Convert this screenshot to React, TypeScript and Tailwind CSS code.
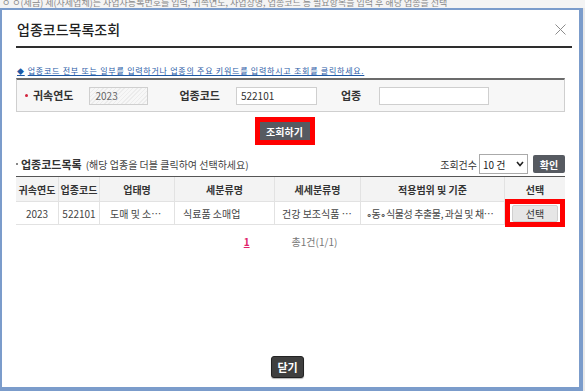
const FONT = { fontFamily: '"Noto Sans CJK KR", "Noto Sans", "Liberation Sans", sans-serif' };

const cols = [
  { label: "귀속연도", w: "w-[43px]", value: "2023", align: "justify-center" },
  { label: "업종코드", w: "w-[41px]", value: "522101", align: "justify-center" },
  { label: "업태명", w: "w-[75px]", value: "도매 및 소…", align: "pl-[10px]" },
  { label: "세분류명", w: "w-[100px]", value: "식료품 소매업", align: "pl-[8px]" },
  { label: "세세분류명", w: "w-[86px]", value: "건강 보조식품 …", align: "pl-[7px]" },
  { label: "적용범위 및 기준", w: "w-[144px]", value: "∘동∘식물성 추출물, 과실 및 채…", align: "pl-[5px] tracking-[-0.4px]" },
];

function Label({ children, bullet }: { children: React.ReactNode; bullet?: boolean }) {
  return (
    <span className="flex items-center text-[11px] font-bold text-[#333]">
      {bullet && <span className="mr-[5px] h-[3px] w-[3px] rounded-full bg-[#d2233c]" />}
      {children}
    </span>
  );
}

export default function App() {
  return (
    <div className="flex h-[391px] w-[585px] flex-col overflow-hidden bg-[#dfe3ea]" style={FONT}>
      {/* page behind the popup */}
      <div className="h-[8px] overflow-hidden whitespace-nowrap bg-[#f4f4f4] pl-[2px] text-[9px] leading-[5px] text-[#888]">
        ㅇ ㅇ(세금) 세(자세업체)는 사업자등록번호를 입력, 귀속연도, 사업장명, 업종코드 등 필요항목을 입력 후 해당 업종을 선택
      </div>

      <div className="flex flex-1">
        {/* popup */}
        <div className="flex w-[583px] flex-col border-[2px] border-r-[4px] border-b-[4px] border-[#7b9ccb] bg-white pl-[14px] pr-[14px]">
          {/* header */}
          <div className="mr-[-7px] flex h-[38px] items-center justify-between border-b-2 border-[#2e2e2e] pt-[2px]">
            <span className="pl-[1px] text-[14px] font-medium text-[#222]">업종코드목록조회</span>
            <svg width="11" height="11" viewBox="0 0 11 11" className="mr-[6px]">
              <path d="M0.5 0.5 L10.5 10.5 M10.5 0.5 L0.5 10.5" stroke="#8c8c8c" strokeWidth="1" />
            </svg>
          </div>

          {/* info */}
          <p className="mt-[18px] flex items-center whitespace-nowrap pl-[1px] text-[8px] leading-[10px] tracking-[0.75px] text-[#1f5aa6] underline">
            <span className="mr-[3px] text-[7px] text-[#1f5aa6]">◆</span>
            업종코드 전부 또는 일부를 입력하거나 업종의 주요 키워드를 입력하시고 조회를 클릭하세요.
          </p>

          {/* search box */}
          <div className="mt-[2px] flex h-[34px] items-center border border-t-2 border-[#cfcfcf] border-t-[#6b6b6b] bg-[#f7f7f7] pl-[8px]">
            <Label bullet>귀속연도</Label>
            <div
              className="ml-[16px] flex h-[18px] w-[59px] items-center border border-[#cfcfcf] pl-[5px] text-[10px] text-[#666]"
              style={{ backgroundImage: "repeating-linear-gradient(135deg, #ececec 0 1px, #f7f7f7 1px 3px)" }}
            >
              2023
            </div>
            <span className="ml-[31px]">
              <Label>업종코드</Label>
            </span>
            <div className="ml-[16px] flex h-[18px] w-[81px] items-center border border-[#cfcfcf] bg-white pl-[4px] text-[10px] text-[#333]">
              522101
            </div>
            <span className="ml-[24px]">
              <Label>업종</Label>
            </span>
            <div className="ml-[18px] h-[18px] w-[110px] border border-[#cfcfcf] bg-white" />
          </div>

          {/* search button */}
          <div className="mt-[5px] flex justify-center pr-[12px]">
            <div className="border-[5px] border-[#ff0000]">
              <button className="flex h-[18px] w-[50px] items-center justify-center bg-[#565a61] text-[10px] font-bold text-white">
                조회하기
              </button>
            </div>
          </div>

          {/* list header */}
          <div className="mt-[8px] flex h-[22px] items-center justify-between">
            <span className="flex items-center text-[11px] text-[#333]">
              <span className="mr-[3px] h-[2px] w-[2px] bg-[#888]" />
              <span className="font-bold">업종코드목록</span>
              <span className="ml-[4px] text-[10px] text-[#444]">(해당 업종을 더블 클릭하여 선택하세요)</span>
            </span>
            <span className="flex items-center">
              <span className="text-[10px] text-[#333]">조회건수</span>
              <div className="ml-[2px] flex h-[20px] w-[49px] items-center justify-between border border-[#aaa] bg-white pl-[3px] pr-[3px] text-[10px] text-[#222]">
                10 건
                <svg width="8" height="6" viewBox="0 0 8 6">
                  <path d="M1 1 L4 4.5 L7 1" fill="none" stroke="#222" strokeWidth="1.6" />
                </svg>
              </div>
              <button className="ml-[5px] h-[18px] w-[32px] rounded-[2px] bg-[#565a61] text-[10px] font-bold text-white">확인</button>
            </span>
          </div>

          {/* table */}
          <div className="mt-[1px] border-t border-[#555]">
            <div className="flex h-[24px] bg-[#f3f3f3] text-[10px] font-bold text-[#333]">
              {cols.map((c) => (
                <div key={c.label} className={`${c.w} flex items-center justify-center whitespace-nowrap border-r border-[#e2e2e2]`}>
                  {c.label}
                </div>
              ))}
              <div className="flex flex-1 items-center justify-center">선택</div>
            </div>
            <div className="flex h-[24px] border-y border-[#e2e2e2] text-[10px] text-[#444]">
              {cols.map((c) => (
                <div key={c.label} className={`${c.w} flex items-center overflow-hidden whitespace-nowrap border-r border-[#e2e2e2] ${c.align}`}>
                  {c.value}
                </div>
              ))}
              <div className="relative flex flex-1 items-center justify-center">
                <div className="absolute inset-x-0 top-[-3px] bottom-[-3px] border-[5px] border-[#ff0000]" />
                <button className="h-[17px] w-[46px] rounded-[2px] border border-[#cfcfcf] bg-[#e6e6e6] text-[10px] text-[#333]">선택</button>
              </div>
            </div>
          </div>

          {/* pagination */}
          <div className="mt-[9px] flex justify-center text-[10px]">
            <span className="font-bold text-[#e0246a] underline">1</span>
            <span className="ml-[42px] text-[#777]">총1건(1/1)</span>
          </div>

          <div className="flex-1" />

          {/* close */}
          <div className="mb-[9px] flex justify-center pr-[6px]">
            <button className="h-[22px] w-[33px] rounded-[3px] border border-[#222] bg-[#3f3f3f] text-[11px] font-bold text-white shadow-[0_1px_1px_rgba(0,0,0,0.3)]">
              닫기
            </button>
          </div>
        </div>
        <div className="flex-1 bg-[#e9e9e9]" />
      </div>
    </div>
  );
}
